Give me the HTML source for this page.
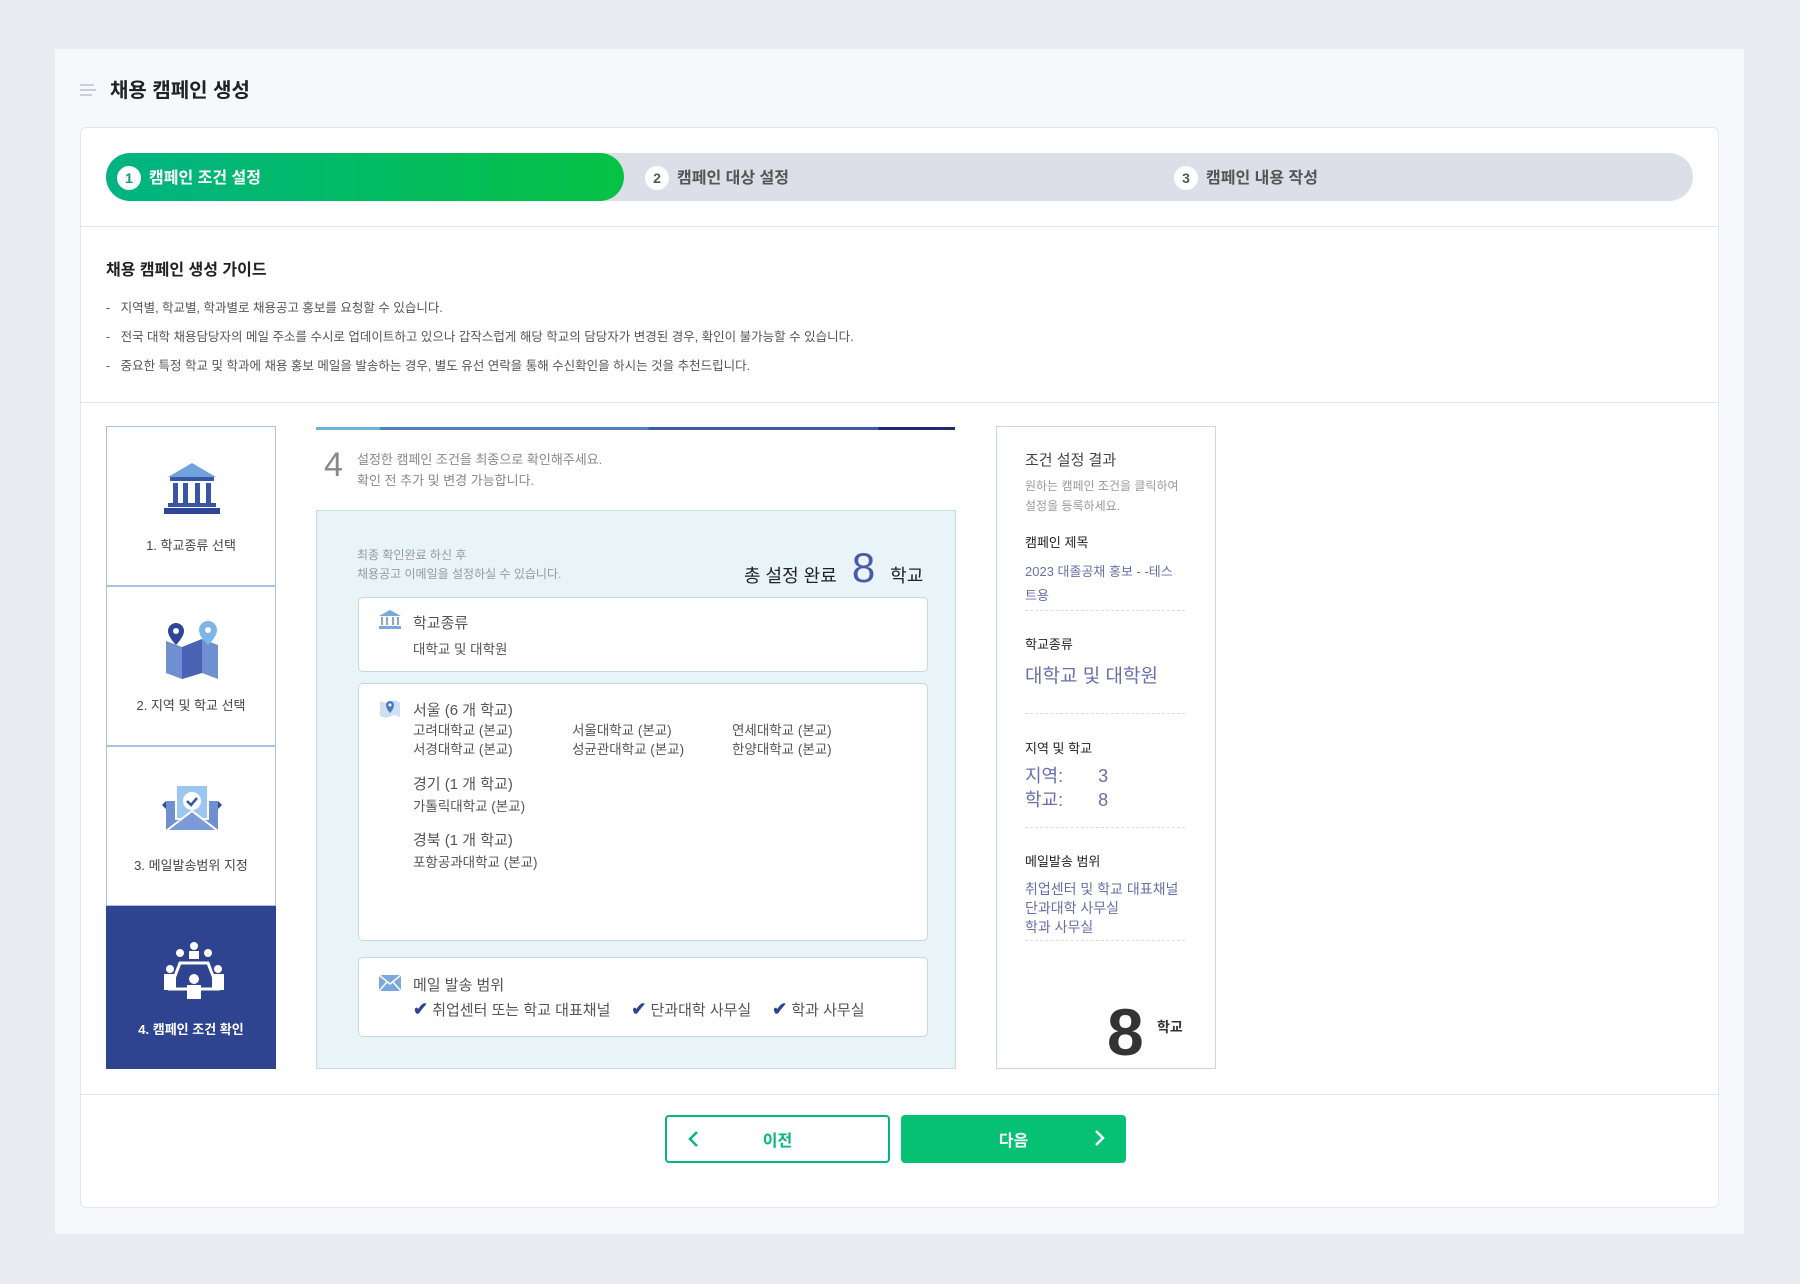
<!DOCTYPE html>
<html><head><meta charset="utf-8"><style>
*{margin:0;padding:0;box-sizing:border-box}
body{width:1800px;height:1284px;background:#e9ecf0;font-family:"Liberation Sans","Noto Sans CJK KR",sans-serif;position:relative;overflow:hidden;color:#333}
.a{position:absolute}
#panel{left:55px;top:49px;width:1689px;height:1185px;background:#f6f8fb}
#card{left:80px;top:127px;width:1639px;height:1081px;background:#fff;border:1px solid #e3e6ea;border-radius:6px}
.hr{height:1px;background:#e3e6ea}
.num{display:inline-block;width:24px;height:24px;border-radius:50%;background:#fff;color:#555;font-size:14px;font-weight:bold;text-align:center;line-height:24px;margin-right:8px}
.step{top:155px;height:48px;line-height:48px;font-size:16px;font-weight:bold;color:#555}
.bul{left:106px;font-size:12.5px;color:#555}
.nav{left:106px;width:170px;height:160px;border:1px solid #a9c3e0;background:#fff;text-align:center;font-size:13px;color:#444}
.nav svg{position:absolute;left:55px;top:34px}
.nav span{position:absolute;left:0;right:0;top:108px}
.box{background:#fff;border:1px solid #c8d6e0;border-radius:5px;left:358px;width:570px}
.bt{font-size:15px;color:#555}
.sm{font-size:13.5px;color:#555}
.rp{font-size:13px}
.dash{border-top:1px dashed #ddd;width:160px;left:1025px}
.lab{color:#6870a8}
</style></head><body>
<div class="a" id="panel"></div>
<div class="a" style="left:80px;top:84px;width:16px;"><div style="height:2px;background:#ccd;margin-bottom:3px;width:14px"></div><div style="height:2px;background:#ccd;margin-bottom:3px;width:16px"></div><div style="height:2px;background:#ccd;width:12px"></div></div>
<div class="a" style="left:110px;top:74px;font-size:20px;font-weight:bold;color:#222">채용 캠페인 생성</div>
<div class="a" id="card"></div>
<div class="a" style="left:106px;top:153px;width:1587px;height:48px;border-radius:24px;background:#dcdfe8"></div>
<div class="a" style="left:106px;top:153px;width:518px;height:48px;border-radius:24px;background:linear-gradient(90deg,#00b383,#06c244)"></div>
<div class="a step" style="left:117px;color:#fff"><span class="num" style="color:#0b9c6a">1</span>캠페인 조건 설정</div>
<div class="a step" style="left:645px"><span class="num">2</span>캠페인 대상 설정</div>
<div class="a step" style="left:1174px"><span class="num">3</span>캠페인 내용 작성</div>
<div class="a hr" style="left:81px;top:226px;width:1637px"></div>
<div class="a" style="left:106px;top:256px;font-size:16px;font-weight:bold;color:#222">채용 캠페인 생성 가이드</div>
<div class="a bul" style="top:297px">-&nbsp;&nbsp; 지역별, 학교별, 학과별로 채용공고 홍보를 요청할 수 있습니다.</div>
<div class="a bul" style="top:326px">-&nbsp;&nbsp; 전국 대학 채용담당자의 메일 주소를 수시로 업데이트하고 있으나 갑작스럽게 해당 학교의 담당자가 변경된 경우, 확인이 불가능할 수 있습니다.</div>
<div class="a bul" style="top:355px">-&nbsp;&nbsp; 중요한 특정 학교 및 학과에 채용 홍보 메일을 발송하는 경우, 별도 유선 연락을 통해 수신확인을 하시는 것을 추천드립니다.</div>
<div class="a hr" style="left:81px;top:402px;width:1637px"></div>

<div class="a nav" style="top:426px"><svg width="60" height="56" viewBox="0 0 60 56"><path d="M30 2 L54 16 H6Z" fill="#6fa3e0"/><rect x="8" y="16" width="44" height="4" fill="#3a55a5"/><rect x="11" y="22" width="5" height="20" fill="#3a55a5"/><rect x="21" y="22" width="5" height="20" fill="#3a55a5"/><rect x="33" y="22" width="5" height="20" fill="#3a55a5"/><rect x="44" y="22" width="5" height="20" fill="#3a55a5"/><rect x="6" y="42" width="48" height="4" fill="#3a55a5"/><rect x="2" y="47" width="56" height="6" fill="#2e4699"/></svg><span>1. 학교종류 선택</span></div>
<div class="a nav" style="top:586px"><svg width="60" height="60" viewBox="0 0 60 60"><path d="M4 20 L20 26 L40 18 L56 24 V58 L40 52 L20 58 L4 52Z" fill="#6f8fd0"/><path d="M20 26 L40 18 V52 L20 58Z" fill="#4a63b5"/><path d="M14 2a8 8 0 0 1 8 8c0 6-8 14-8 14s-8-8-8-14a8 8 0 0 1 8-8z" fill="#2e4699"/><circle cx="14" cy="10" r="3" fill="#fff"/><path d="M46 0a9 9 0 0 1 9 9c0 7-9 15-9 15s-9-8-9-15a9 9 0 0 1 9-9z" fill="#7db5ea"/><circle cx="46" cy="9" r="3" fill="#fff"/></svg><span>2. 지역 및 학교 선택</span></div>
<div class="a nav" style="top:746px"><svg width="60" height="56" viewBox="0 0 60 56"><path d="M4 20 H56 V50 H4Z" fill="#6f8fd0"/><rect x="14" y="4" width="32" height="34" fill="#9cc7f0" stroke="#fff" stroke-width="2"/><circle cx="30" cy="20" r="9" fill="#fff"/><path d="M25 20l4 4 6-7" stroke="#3a55a5" stroke-width="2.5" fill="none"/><path d="M4 50 L30 30 L56 50Z" fill="#7d9ad8" stroke="#fff" stroke-width="2"/><path d="M4 20 L0 24 L4 28Z M56 20 L60 24 L56 28Z" fill="#2e4699"/></svg><span>3. 메일발송범위 지정</span></div>
<div class="a nav" style="top:906px;height:163px;background:#2e4491;border-color:#2e4491;color:#fff;font-weight:bold"><svg width="64" height="60" viewBox="0 0 64 60"><g fill="#fff"><circle cx="32" cy="5" r="4"/><rect x="27" y="10" width="10" height="8"/><circle cx="18" cy="12" r="4"/><circle cx="46" cy="12" r="4"/><path d="M18 22 L46 22 L56 48 L8 48Z" fill="none" stroke="#fff" stroke-width="3"/><circle cx="8" cy="28" r="4"/><rect x="2" y="33" width="12" height="16"/><circle cx="56" cy="28" r="4"/><rect x="50" y="33" width="12" height="16"/><circle cx="32" cy="38" r="5"/><rect x="25" y="44" width="14" height="14"/></g></svg><span style="top:112px">4. 캠페인 조건 확인</span></div>

<div class="a" style="left:316px;top:427px;width:639px;height:3px;background:linear-gradient(90deg,#6ab4d6 0 10%,#4d83c0 10% 52%,#3d5ba8 52% 88%,#1f2a6e 88%)"></div>
<div class="a" style="left:324px;top:446px;font-size:34px;color:#888">4</div>
<div class="a" style="left:357px;top:449px;font-size:13px;color:#888;line-height:21px">설정한 캠페인 조건을 최종으로 확인해주세요.<br>확인 전 추가 및 변경 가능합니다.</div>
<div class="a" style="left:316px;top:510px;width:640px;height:559px;background:#e8f4f8;border:1px solid #c8dde6"></div>
<div class="a" style="left:357px;top:546px;font-size:12px;color:#999;line-height:19px">최종 확인완료 하신 후<br>채용공고 이메일을 설정하실 수 있습니다.</div>
<div class="a" style="left:744px;top:544px;font-size:18px;color:#222">총 설정 완료 <span style="font-size:42px;color:#4a5aa8;margin:0 10px">8</span> 학교</div>
<div class="a box" style="top:597px;height:75px"></div>
<svg class="a" style="left:379px;top:610px" width="22" height="20" viewBox="0 0 22 20"><path d="M11 0L22 6H0Z" fill="#7aa8dc"/><g fill="#8ab"><rect x="2" y="7" width="2" height="8"/><rect x="7" y="7" width="2" height="8"/><rect x="13" y="7" width="2" height="8"/><rect x="18" y="7" width="2" height="8"/></g><rect x="0" y="16" width="22" height="3" fill="#7aa8dc"/></svg>
<div class="a bt" style="left:413px;top:612px">학교종류</div>
<div class="a sm" style="left:413px;top:638px">대학교 및 대학원</div>
<div class="a box" style="top:683px;height:258px"></div>
<svg class="a" style="left:379px;top:697px" width="22" height="22" viewBox="0 0 22 22"><path d="M1 4L7 6L15 3L21 5V20L15 18L7 21L1 19Z" fill="#cfe0f2"/><path d="M11 4a4 4 0 0 1 4 4c0 4-4 8-4 8s-4-4-4-8a4 4 0 0 1 4-4z" fill="#4a7ac0"/><circle cx="11" cy="8" r="1.5" fill="#fff"/></svg>
<div class="a bt" style="left:413px;top:699px">서울 (6 개 학교)</div>
<div class="a sm" style="left:413px;top:721px;line-height:19px">고려대학교 (본교)<br>서경대학교 (본교)</div>
<div class="a sm" style="left:572px;top:721px;line-height:19px">서울대학교 (본교)<br>성균관대학교 (본교)</div>
<div class="a sm" style="left:732px;top:721px;line-height:19px">연세대학교 (본교)<br>한양대학교 (본교)</div>
<div class="a bt" style="left:413px;top:773px">경기 (1 개 학교)</div>
<div class="a sm" style="left:413px;top:795px">가톨릭대학교 (본교)</div>
<div class="a bt" style="left:413px;top:829px">경북 (1 개 학교)</div>
<div class="a sm" style="left:413px;top:851px">포항공과대학교 (본교)</div>
<div class="a box" style="top:957px;height:80px"></div>
<svg class="a" style="left:379px;top:975px" width="22" height="16" viewBox="0 0 22 16"><rect width="22" height="16" fill="#7aa8dc"/><path d="M0 0L11 9L22 0M0 16L8 7M22 16L14 7" stroke="#fff" stroke-width="1.5" fill="none"/></svg>
<div class="a bt" style="left:413px;top:974px">메일 발송 범위</div>
<div class="a" style="left:413px;top:999px;font-size:15px;color:#555"><span style="color:#2e4491;font-weight:bold;font-size:18px">✔</span> 취업센터 또는 학교 대표채널 &nbsp;&nbsp;&nbsp;&nbsp;<span style="color:#2e4491;font-weight:bold;font-size:18px">✔</span> 단과대학 사무실 &nbsp;&nbsp;&nbsp;&nbsp;<span style="color:#2e4491;font-weight:bold;font-size:18px">✔</span> 학과 사무실</div>

<div class="a" style="left:996px;top:426px;width:220px;height:643px;border:1px solid #cdd5dd;background:#fff"></div>
<div class="a" style="left:1025px;top:449px;font-size:15px;color:#444">조건 설정 결과</div>
<div class="a rp" style="left:1025px;top:476px;color:#999;font-size:12px;line-height:20px">원하는 캠페인 조건을 클릭하여<br>설정을 등록하세요.</div>
<div class="a rp" style="left:1025px;top:532px;color:#222">캠페인 제목</div>
<div class="a rp lab" style="left:1025px;top:560px;line-height:24px">2023 대졸공채 홍보 - -테스<br>트용</div>
<div class="a dash" style="top:610px"></div>
<div class="a rp" style="left:1025px;top:634px;color:#222">학교종류</div>
<div class="a lab" style="left:1025px;top:661px;font-size:19px">대학교 및 대학원</div>
<div class="a dash" style="top:713px"></div>
<div class="a rp" style="left:1025px;top:738px;color:#222">지역 및 학교</div>
<div class="a lab" style="left:1025px;top:764px;font-size:18px;line-height:24px">지역:&nbsp;&nbsp;&nbsp;&nbsp;&nbsp;&nbsp;&nbsp;3<br>학교:&nbsp;&nbsp;&nbsp;&nbsp;&nbsp;&nbsp;&nbsp;8</div>
<div class="a dash" style="top:827px"></div>
<div class="a rp" style="left:1025px;top:851px;color:#222">메일발송 범위</div>
<div class="a rp lab" style="left:1025px;top:880px;font-size:14px;line-height:19px">취업센터 및 학교 대표채널<br>단과대학 사무실<br>학과 사무실</div>
<div class="a dash" style="top:940px"></div>
<div class="a" style="left:1107px;top:997px;font-size:66px;font-weight:bold;color:#333;line-height:70px">8</div>
<div class="a" style="left:1157px;top:1017px;font-size:14px;font-weight:bold;color:#333">학교</div>

<div class="a hr" style="left:81px;top:1094px;width:1637px"></div>
<div class="a" style="left:665px;top:1115px;width:225px;height:48px;border:2px solid #06b67a;border-radius:4px;background:#fff;color:#06b67a;font-size:16px;font-weight:bold;text-align:center;line-height:44px;padding-top:3px">이전<svg style="position:absolute;left:20px;top:13px" width="12" height="18" viewBox="0 0 12 18"><path d="M10 2L3 9L10 16" stroke="#06b67a" stroke-width="2.5" fill="none"/></svg></div>
<div class="a" style="left:901px;top:1115px;width:225px;height:48px;border-radius:4px;background:#06c074;color:#fff;font-size:16px;font-weight:bold;text-align:center;line-height:48px;padding-top:3px">다음<svg style="position:absolute;right:20px;top:14px" width="12" height="18" viewBox="0 0 12 18"><path d="M2 2L9 9L2 16" stroke="#fff" stroke-width="2.5" fill="none"/></svg></div>
</body></html>
